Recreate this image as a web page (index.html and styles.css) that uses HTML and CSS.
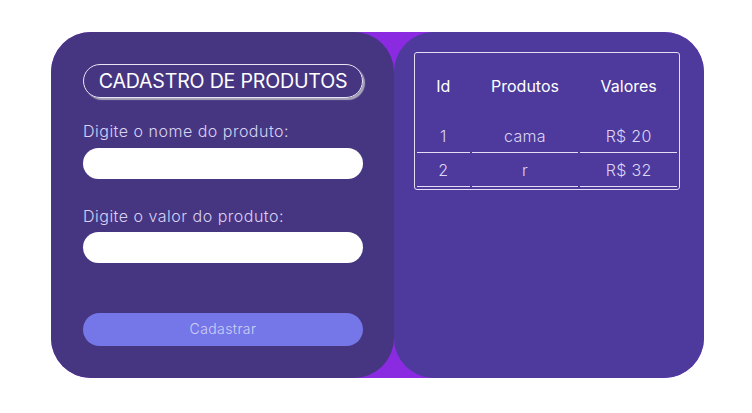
FILE: index.html
```html
<!DOCTYPE html>
<html lang="pt-BR">
<head>
<meta charset="utf-8">
<title>Cadastro de Produtos</title>
<link rel="stylesheet" href="styles.css">
</head>
<body>
<main class="container">
  <section class="form-panel">
    <h1 class="title">CADASTRO DE PRODUTOS</h1>
    <label class="label label-first" for="nome">Digite o nome do produto:</label>
    <input class="field" id="nome" type="text">
    <label class="label label-second" for="valor">Digite o valor do produto:</label>
    <input class="field field-second" id="valor" type="text">
    <button class="submit" type="button">Cadastrar</button>
  </section>
  <section class="table-panel">
    <table class="products">
      <thead>
        <tr><th class="col-id">Id</th><th class="col-prod">Produtos</th><th class="col-val">Valores</th></tr>
      </thead>
      <tbody>
        <tr><td>1</td><td>cama</td><td>R$ 20</td></tr>
        <tr><td>2</td><td>r</td><td>R$ 32</td></tr>
      </tbody>
    </table>
  </section>
</main>
</body>
</html>
```
FILE: styles.css
```css
* { box-sizing: border-box; }
body {
  margin: 0;
  background: #ffffff;
  font-family: "Inter", "Noto Sans", sans-serif;
}
.container {
  display: flex;
  width: 653px;
  height: 346px;
  margin: 32px 0 0 51px;
  background: #8a2be2;
  border-radius: 40px;
}
.form-panel {
  display: flex;
  flex-direction: column;
  align-items: flex-start;
  width: 343px;
  padding: 32px 31px 32px 32px;
  background: #463682;
  border-radius: 40px;
}
.title {
  margin: 0;
  width: 280px;
  height: 34px;
  border: 1px solid #e8e4f4;
  border-radius: 17px;
  box-shadow: 2px 2px 1px #a9a6b8;
  color: #ffffff;
  font-size: 19.6px;
  font-weight: 400;
  line-height: 32px;
  text-align: center;
  letter-spacing: -0.2px;
}
.label {
  display: block;
  color: #d9d2f2;
  font-size: 16px;
  font-weight: 300;
  line-height: 24px;
  letter-spacing: 0.5px;
}
.label-first { margin-top: 21px; }
.label-second { margin-top: 25px; }
.field {
  width: 280px;
  height: 31px;
  margin-top: 5px;
  border: none;
  border-radius: 16px;
  background: #ffffff;
}
.field-second { margin-top: 4px; }
.submit {
  width: 280px;
  height: 33px;
  margin-top: 50px;
  padding: 0 0 2px;
  border: none;
  border-radius: 17px;
  background: #7577e8;
  color: #cfd0f6;
  font-family: inherit;
  font-size: 14px;
  font-weight: 300;
  letter-spacing: 0.4px;
}
.table-panel {
  width: 310px;
  padding: 20px;
  background: #4d3a9c;
  border-radius: 40px;
}
.products {
  width: 266px;
  border: 1px solid #e3def3;
  border-radius: 3px;
  border-spacing: 2px;
  color: #ffffff;
  font-size: 16px;
}
.products th {
  height: 64px;
  padding: 0 0 3px;
  font-weight: 400;
}
.col-id { width: 53px; }
.col-prod { width: 107px; }
.col-val { width: 97px; }
.products td {
  height: 32px;
  padding: 0 0 1px;
  border-bottom: 1px solid #e3def3;
  color: #dcd5f4;
  font-weight: 300;
  text-align: center;
  letter-spacing: 0.3px;
}
```
